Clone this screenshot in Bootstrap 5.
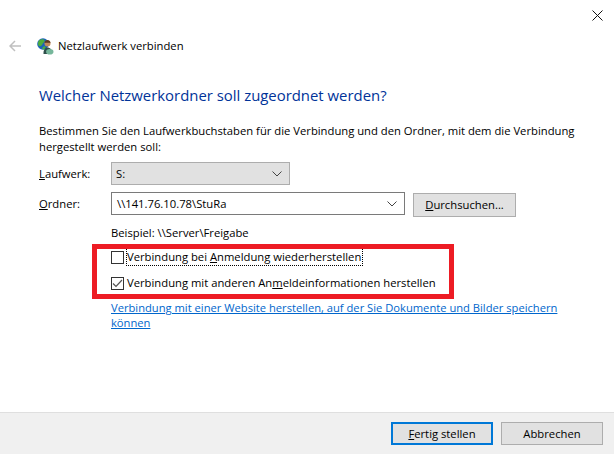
<!DOCTYPE html>
<html lang="de">
<head>
  <meta charset="UTF-8">
  <title>Netzlaufwerk verbinden</title>
  <link href="https://cdn.jsdelivr.net/npm/bootstrap@5.3.0/dist/css/bootstrap.min.css" rel="stylesheet">
  <style>
    html, body { height: 100%; }
    body { font-family: "Open Sans", "Noto Sans", sans-serif; font-size: 11.25px; line-height: 16px; color: #000; background: #fff; overflow: hidden; }
    .wiz { position: relative; width: 614px; height: 454px; }
    .wiz-close { height: 30px; padding: 10px 11px 0 0; }
    .wiz-top { height: 32px; padding: 0 0 0 9px; }
    .wiz-top .wiz-name { font-size: 11.25px; margin-left: 4px; }
    .wiz-back { margin-right: 16px; }
    .wiz-main { padding: 22px 0 0 39px; height: 350px; }
    .wiz-head { color: #003399; font-family: inherit; font-size: 14.9px; font-weight: 400; line-height: 22px; margin: 0 0 17px; }
    .wiz-intro { margin: 0 0 7px; width: 560px; }
    .wiz-label { width: 72px; flex: none; }
    .wiz-drop { width: 179px; height: 23px; background: #e1e1e1; border: 1px solid #adadad; padding: 0 7px 0 4px; }
    .wiz-combo { width: 294px; height: 23px; border: 1px solid #7a7a7a; padding: 0 7px 0 5px; margin-right: 8px; }
    .wiz-btn { font-size: 11.25px; line-height: 16px; color: #000; background: #e1e1e1; border: 1px solid #adadad; border-radius: 0; padding: 0; height: 24px; width: 103px; }
    .wiz-row { height: 23px; margin-bottom: 7px; }
    .wiz-row .wiz-btn { margin-top: 2px; }
    .wiz-hint { margin: 10px 0 8px 72px; }
    .wiz-opts { margin-left: 72px; }
    .wiz-opt { height: 16px; margin-bottom: 10px; }
    .wiz-box { width: 13px; height: 13px; border: 1px solid #333; flex: none; margin-right: 3px; }
    .wiz-focus { outline: 1px dotted #000; padding-right: 1px; }
    .wiz-link { display: block; margin: -1px 0 0 72px; width: 470px; font-size: 11.18px; line-height: 15px; color: #0066cc; text-decoration: underline; }
    .wiz-foot { height: 42px; background: #f0f0f0; border-top: 1px solid #dfdfdf; padding: 9px 11px 0 0; }
    .wiz-foot .wiz-btn { width: 102px; height: 23px; }
    .wiz-foot .wiz-main-btn { border: 2px solid #0078d7; }
    .wiz-mark { position: absolute; left: 92px; top: 244px; width: 362px; height: 55px; border: 5px solid #ed1c24; pointer-events: none; }
  </style>
</head>

<body>
  <div class="wiz d-flex flex-column">
    <div class="wiz-close d-flex justify-content-end">
      <svg width="11" height="11" viewBox="0 0 11 11"><path d="M.5.5l10 10M10.500.5l-10 10" stroke="#111" fill="none"/></svg>
    </div>

    <div class="wiz-top d-flex align-items-center">
      <svg class="wiz-back" width="12" height="12" viewBox="0 0 12 12"><path d="M6 1L1 6l5 5M1 6h11" stroke="#c0c0c0" stroke-width="1.500" fill="none"/></svg>
      <svg width="17" height="17" viewBox="0 0 17 17">
        <circle cx="6" cy="6" r="5.800" fill="#1c63b8"/>
        <path d="M2.500 2C4.500.8 7 1 7.500 2.500S6 4.500 5.500 6 3.500 9 2 8 1 3 2.500 2zM6 9c1-1 2.500-1 2.500.3S7 11.800 6 11.500 5 10 6 9z" fill="#4cae3c"/>
        <path d="M6.500 16c-.3-4 1.500-6.500 4-6.500s4.500 2 4.500 6.500z" fill="#2f4f4a"/>
        <circle cx="10.500" cy="5.500" r="3" fill="#c08a5a"/>
        <path d="M7.500 5c0-2 1.500-3 3-3s3 1 3 3c-2-.5-4-.5-6 0z" fill="#5a3a22"/>
        <ellipse cx="12.800" cy="13.800" rx="3.700" ry="2.800" fill="#76b79b"/>
      </svg>
      <span class="wiz-name">Netzlaufwerk verbinden</span>
    </div>

    <div class="wiz-main flex-grow-1">
      <h1 class="wiz-head">Welcher Netzwerkordner soll zugeordnet werden?</h1>
      <p class="wiz-intro">Bestimmen Sie den Laufwerkbuchstaben für die Verbindung und den Ordner, mit dem die Verbindung hergestellt werden soll:</p>

      <div class="wiz-row d-flex align-items-center">
        <span class="wiz-label"><u>L</u>aufwerk:</span>
        <div class="wiz-drop d-flex align-items-center justify-content-between">
          <span>S:</span>
          <svg width="10" height="6" viewBox="0 0 10 6"><path d="M.5.5L5 5 9.500.5" stroke="#444" fill="none"/></svg>
        </div>
      </div>

      <div class="wiz-row d-flex align-items-center">
        <span class="wiz-label"><u>O</u>rdner:</span>
        <div class="wiz-combo d-flex align-items-center justify-content-between">
          <span>\\141.76.10.78\StuRa</span>
          <svg width="10" height="6" viewBox="0 0 10 6"><path d="M.5.5L5 5 9.500.5" stroke="#444" fill="none"/></svg>
        </div>
        <button type="button" class="btn wiz-btn"><u>D</u>urchsuchen...</button>
      </div>

      <p class="wiz-hint">Beispiel: \\Server\Freigabe</p>

      <div class="wiz-opts">
        <div class="wiz-opt d-flex align-items-center">
          <span class="wiz-box"></span>
          <span class="wiz-focus">Verbindung bei <u>A</u>nmeldung wiederherstellen</span>
        </div>
        <div class="wiz-opt d-flex align-items-center">
          <span class="wiz-box d-flex align-items-center justify-content-center">
            <svg width="11" height="9" viewBox="0 0 11 9"><path d="M1 4.500L4 7.500 10 1" stroke="#555" stroke-width="1.200" fill="none"/></svg>
          </span>
          <span>Verbindung mit anderen An<u>m</u>eldeinformationen herstellen</span>
        </div>
      </div>

      <a class="wiz-link" href="#">Verbindung mit einer Website herstellen, auf der Sie Dokumente und Bilder speichern können</a>
    </div>

    <div class="wiz-foot d-flex justify-content-end gap-2">
      <button type="button" class="btn wiz-btn wiz-main-btn"><u>F</u>ertig stellen</button>
      <button type="button" class="btn wiz-btn">Abbrechen</button>
    </div>

    <div class="wiz-mark"></div>
  </div>

  <script src="https://cdn.jsdelivr.net/npm/bootstrap@5.3.0/dist/js/bootstrap.bundle.min.js"></script>
</body>
</html>
